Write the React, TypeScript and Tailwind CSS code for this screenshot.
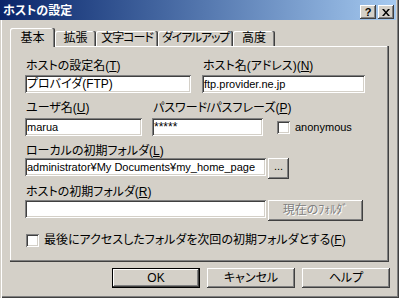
import React from 'react';

const font = "font-['Liberation_Sans','Noto_Sans_CJK_JP',sans-serif] [font-feature-settings:'palt']";
const raised = 'shadow-[inset_-1px_-1px_0_#404040,inset_1px_1px_0_#fff,inset_-2px_-2px_0_#808080]';
const sunken = 'shadow-[inset_1px_1px_0_#808080,inset_-1px_-1px_0_#fff,inset_2px_2px_0_#404040,inset_-2px_-2px_0_#d4d0c8]';

const TABS = [
  { label: '基本', w: 'w-[45px]', t: '' },
  { label: '拡張', w: 'w-[41px]', t: '' },
  { label: '文字コード', w: 'w-[62px]', t: 'tracking-[-1px]' },
  { label: 'ダイアルアップ', w: 'w-[75px]', t: 'tracking-[-1.2px]' },
  { label: '高度', w: 'w-[42px]', t: '' },
];

function Label({ text, k }: { text: string; k: string }) {
  return (
    <div className="h-[14px] leading-[14px] text-[12px] pl-[1px] whitespace-nowrap">
      {text}(<u>{k}</u>)
    </div>
  );
}

function Field({ value, w, mt = 'mt-[1px]', size = 'text-[11px]' }: { value: string; w: string; mt?: string; size?: string }) {
  return (
    <div className={`${w} ${mt} h-[18px] bg-white ${sunken} pl-[2px] leading-[18px] ${size} whitespace-nowrap overflow-hidden shrink-0`}>
      {value}
    </div>
  );
}

function CheckBox() {
  return <div className={`w-[13px] h-[13px] bg-white shrink-0 ${sunken}`} />;
}

export default function App() {
  return (
    <div className={`${font} relative w-[399px] h-[298px] bg-[#d4d0c8] text-black flex flex-col shadow-[inset_1px_0_0_#d4d0c8,inset_2px_0_0_#fff,inset_-1px_-1px_0_#404040,inset_-2px_-2px_0_#808080]`}>
      {/* title bar */}
      <div className="w-[396px] h-[20px] flex items-start bg-gradient-to-r from-[#0a246a] to-[#a6caf0]">
        <span className="pl-[3px] pt-[4px] text-white font-bold text-[12px] leading-[14px] flex-1">ホストの設定</span>
        <div className={`mt-[5px] w-[16px] h-[14px] bg-[#d4d0c8] ${raised} flex items-center justify-center text-[11px] font-bold leading-none`}>
          ?
        </div>
        <div className={`mt-[5px] ml-[2px] mr-[2px] w-[16px] h-[14px] bg-[#d4d0c8] ${raised} flex items-center justify-center`}>
          <svg width="8" height="7" viewBox="0 0 8 7">
            <path d="M0 0h2l2 2.5L6 0h2L5 3.5 8 7H6L4 4.5 2 7H0l3-3.5z" fill="#000" />
          </svg>
        </div>
      </div>

      {/* tabs */}
      <div className="pl-[10px] pt-[8px] flex flex-col">
        <div className="flex items-end h-[18px]">
          {TABS.map((t, i) =>
            i === 0 ? (
              <div
                key={t.label}
                className={`relative z-10 ${t.w} h-[19px] -mb-[1px] bg-[#d4d0c8] rounded-t-[2px] shadow-[inset_-1px_0_0_#404040,inset_-2px_0_0_#808080,inset_1px_1px_0_#fff] text-[12px] leading-[16px] pt-[2px] text-center`}
              >
                {t.label}
              </div>
            ) : (
              <div
                key={t.label}
                className={`${t.w} ${t.t} h-[15px] rounded-t-[2px] shadow-[inset_-1px_0_0_#404040,inset_-2px_0_0_#808080,inset_1px_1px_0_#fff] text-[12px] leading-[15px] text-center whitespace-nowrap`}
              >
                {t.label}
              </div>
            )
          )}
        </div>

        {/* panel */}
        <div className="w-[379px] h-[216px] shadow-[inset_-1px_-1px_0_#404040,inset_-2px_-2px_0_#808080,inset_1px_1px_0_#fff] pl-[15px] pt-[13px] flex flex-col">
          <div className="flex gap-[11px]">
            <div className="w-[166px] flex flex-col">
              <Label text="ホストの設定名" k="T" />
              <Field value="プロバイダ(FTP)" w="w-[166px]" mt="mt-[2px]" size="text-[12px]" />
            </div>
            <div className="w-[163px] flex flex-col">
              <Label text="ホスト名(アドレス)" k="N" />
              <Field value="ftp.provider.ne.jp" w="w-[163px]" mt="mt-[2px]" />
            </div>
          </div>

          <div className="flex mt-[8px] items-end">
            <div className="w-[117px] flex flex-col">
              <Label text="ユーザ名" k="U" />
              <Field value="marua" w="w-[117px]" mt="mt-[3px]" />
            </div>
            <div className="w-[111px] flex flex-col ml-[10px]">
              <Label text="パスワード/パスフレーズ" k="P" />
              <Field value="*****" w="w-[111px]" mt="mt-[3px]" size="text-[12px]" />
            </div>
            <div className="flex items-center ml-[14px] mb-[2px] gap-[5px]">
              <CheckBox />
              <span className="text-[11px] leading-[14px]">anonymous</span>
            </div>
          </div>

          <div className="mt-[8px]">
            <Label text="ローカルの初期フォルダ" k="L" />
            <div className="flex items-start">
              <Field value="administrator¥My Documents¥my_home_page" w="w-[241px]" mt="mt-0" />
              <div className={`ml-[2px] w-[21px] h-[21px] ${raised} text-[11px] leading-[16px] text-center`}>...</div>
            </div>
          </div>

          <div className="mt-[6px]">
            <Label text="ホストの初期フォルダ" k="R" />
            <div className="flex items-start mt-[1px]">
              <Field value="" w="w-[241px]" mt="mt-0" />
              <div className={`ml-[2px] w-[95px] h-[21px] ${raised} text-[12px] leading-[21px] text-center text-[#808080] [text-shadow:1px_1px_0_#fff]`}>
                現在のﾌｫﾙﾀﾞ
              </div>
            </div>
          </div>

          <div className="flex items-center gap-[5px] mt-[12px] pl-[1px]">
            <CheckBox />
            <span className="text-[12px] leading-[14px] whitespace-nowrap">
              最後にアクセスしたフォルダを次回の初期フォルダとする(<u>F</u>)
            </span>
          </div>
        </div>
      </div>

      {/* buttons */}
      <div className="flex gap-[7px] ml-[112px] mt-[6px]">
        <div className="w-[88px] h-[20px] shadow-[inset_0_0_0_1px_#000,inset_-2px_-2px_0_#404040,inset_2px_2px_0_#fff,inset_-3px_-3px_0_#808080] text-[12px] leading-[20px] text-center">
          OK
        </div>
        <div className={`w-[88px] h-[20px] ${raised} text-[12px] leading-[20px] text-center`}>キャンセル</div>
        <div className={`w-[88px] h-[20px] ${raised} text-[12px] leading-[20px] text-center`}>ヘルプ</div>
      </div>
    </div>
  );
}
